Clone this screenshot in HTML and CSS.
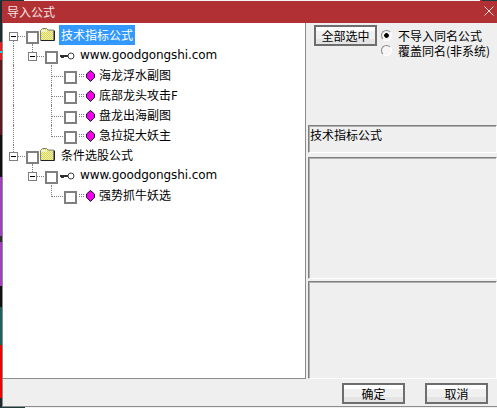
FILE: index.html
```html
<!DOCTYPE html>
<html lang="zh">
<head>
<meta charset="utf-8">
<title>导入公式</title>
<link rel="stylesheet" href="styles.css">
</head>
<body>
<svg class="defs" width="0" height="0" aria-hidden="true">
  <defs>
    <pattern id="dither" width="2" height="2" patternUnits="userSpaceOnUse"><rect width="2" height="2" fill="#ffff40"/><rect width="1" height="1" fill="#c8c8c0"/><rect x="1" y="1" width="1" height="1" fill="#c8c8c0"/></pattern>
    <symbol id="folder" viewBox="0 0 15 13"><path d="M0.5 12.5V2.5L2.5 0.5H6.5L8 2H13.5V12.5Z" fill="url(#dither)" stroke="#808080"/><path d="M1 3H7" stroke="#fff"/><path d="M1 12.5H14.5V2.5" stroke="#202020" fill="none"/></symbol>
    <symbol id="key" viewBox="0 0 15 8"><circle cx="11" cy="4" r="3" fill="#fff" stroke="#404040"/><path d="M0 3.5H8M0 4.5H8M1 5.5H4" stroke="#303030" fill="none"/></symbol>
    <symbol id="gem" viewBox="0 0 16 12"><path d="M0 4.5H5M0 6.5H5" stroke="#808080" stroke-dasharray="1 1"/><path d="M7.5 4L11.5 0.5L15.5 4V7.5L11.5 11.5L7.5 7.5Z" fill="#f000e8" stroke="#101030"/></symbol>
  </defs>
</svg>
<div class="window">
  <header class="titlebar">
    <span class="title">导入公式</span>
    <svg class="close" width="10" height="10" viewBox="0 0 10 10"><path d="M0.5 0.5L9.5 9.5M9.5 0.5L0.5 9.5" stroke="#f0d8d9" stroke-width="1" fill="none"/></svg>
  </header>
  <div class="content">
    <div class="tree">
      <div class="row">
        <span class="expander root-exp first"></span><span class="hline"></span><span class="check"></span>
        <svg class="folder"><use href="#folder"/></svg>
        <span class="label selected">技术指标公式</span>
      </div>
      <div class="row">
        <span class="guide"></span>
        <span class="expander"></span><span class="hline"></span><span class="check"></span>
        <svg class="key"><use href="#key"/></svg>
        <span class="label url">www.goodgongshi.com</span>
      </div>
      <div class="row">
        <span class="guide"></span><span class="guide blank"></span><span class="guide branch"></span><span class="check"></span>
        <svg class="gem"><use href="#gem"/></svg>
        <span class="label leaf">海龙浮水副图</span>
      </div>
      <div class="row">
        <span class="guide"></span><span class="guide blank"></span><span class="guide branch"></span><span class="check"></span>
        <svg class="gem"><use href="#gem"/></svg>
        <span class="label leaf">底部龙头攻击F</span>
      </div>
      <div class="row">
        <span class="guide"></span><span class="guide blank"></span><span class="guide branch"></span><span class="check"></span>
        <svg class="gem"><use href="#gem"/></svg>
        <span class="label leaf">盘龙出海副图</span>
      </div>
      <div class="row">
        <span class="guide"></span><span class="guide blank"></span><span class="guide branch last"></span><span class="check"></span>
        <svg class="gem"><use href="#gem"/></svg>
        <span class="label leaf">急拉捉大妖主</span>
      </div>
      <div class="row">
        <span class="expander root-exp tail"></span><span class="hline"></span><span class="check"></span>
        <svg class="folder"><use href="#folder"/></svg>
        <span class="label folder-label">条件选股公式</span>
      </div>
      <div class="row">
        <span class="guide blank"></span>
        <span class="expander"></span><span class="hline"></span><span class="check"></span>
        <svg class="key"><use href="#key"/></svg>
        <span class="label url">www.goodgongshi.com</span>
      </div>
      <div class="row">
        <span class="guide blank"></span><span class="guide blank"></span><span class="guide branch last"></span><span class="check"></span>
        <svg class="gem"><use href="#gem"/></svg>
        <span class="label leaf">强势抓牛妖选</span>
      </div>
    </div>
    <aside class="side">
      <div class="options">
        <button class="btn">全部选中</button>
        <div class="radios">
          <div class="radio-row"><span class="radio on"></span><span>不导入同名公式</span></div>
          <div class="radio-row"><span class="radio"></span><span>覆盖同名(非系统)</span></div>
        </div>
      </div>
      <div class="panel name">技术指标公式</div>
      <div class="panel desc"></div>
      <div class="panel notes"></div>
    </aside>
  </div>
  <footer class="footer">
    <button class="btn">确定</button>
    <button class="btn">取消</button>
  </footer>
</div>
</body>
</html>
```
FILE: styles.css
```css
* { box-sizing: border-box; }
html, body { margin: 0; padding: 0; }
body {
  width: 497px;
  height: 408px;
  overflow: hidden;
  background:
    linear-gradient(to right, #1c3a3c 0, #1c3a3c 24px, #f4f4f4 24px, #f4f4f4 480px, #d02020 480px, #d02020 482px, #1c3a3c 482px) top / 100% 1px no-repeat,
    linear-gradient(to right, #1c3a3c 0, #1c3a3c 25px, #efefef 25px) bottom / 100% 1px no-repeat,
    linear-gradient(to bottom, #1c2b30 0, #1c2b30 42px, #e02020 42px, #e02020 51px, #20d0e0 51px, #20d0e0 53px, #e02020 53px, #e02020 60px, #5a1a20 60px, #5a1a20 135px, #101010 135px, #101010 177px, #a040c0 177px, #a040c0 236px, #303030 236px, #303030 242px, #a040c0 242px, #a040c0 286px, #101010 286px, #101010 307px, #1c6060 307px, #1c6060 345px, #f00000 345px, #f00000 398px, #1c2b30 398px);
  font: 12px/14px "Noto Sans CJK SC", "Liberation Sans", sans-serif;
  color: #000;
}
.defs { position: absolute; }
.window {
  margin: 1px 0 0 2px;
  width: 495px;
  height: 406px;
  background: #efefef;
  display: flex;
  flex-direction: column;
  border-bottom: 1px solid #8c8c8c;
}
.titlebar {
  height: 22px;
  flex: none;
  background: #b03034;
  color: #f4e4e4;
  display: flex;
  align-items: center;
  justify-content: space-between;
  padding: 0 3px 0 5px;
}
.close { margin-bottom: 3px; }
.content {
  display: flex;
  height: 356px;
  flex: none;
}
.tree {
  width: 304px;
  flex: none;
  background: #fff;
  border-left: 1px solid #8c8c8c;
  border-right: 1px solid #8c8c8c;
  border-bottom: 1px solid #8c8c8c;
  padding-top: 2px;
}
.row {
  height: 20px;
  display: flex;
  align-items: flex-start;
  padding-left: 10px;
}
.check {
  width: 13px;
  height: 13px;
  margin-top: 6px;
  border: 2px solid #808080;
  background: #fff;
  flex: none;
}
.expander {
  width: 9px;
  height: 9px;
  margin: 7px 0 0 14px;
  border: 1px solid #808080;
  background: linear-gradient(#000, #000) center / 5px 1px no-repeat #fff;
  flex: none;
  position: relative;
}
.expander::before {
  content: "";
  position: absolute;
  left: 3px;
  top: -9px;
  height: 8px;
  border-left: 1px dotted #808080;
}
.root-exp { margin-left: -4px; }
.root-exp.first::before { display: none; }
.root-exp.tail::before { top: -8px; height: 7px; }
.root-exp.first::after {
  content: "";
  position: absolute;
  left: 3px;
  top: 8px;
  height: 5px;
  border-left: 1px dotted #808080;
}
.hline {
  width: 8px;
  height: 1px;
  margin-top: 11px;
  background: repeating-linear-gradient(to right, #808080 0, #808080 1px, transparent 1px, transparent 2px);
  flex: none;
}
.guide {
  width: 19px;
  align-self: stretch;
  border-left: 1px dotted #808080;
  flex: none;
}
.guide.blank { border-left-color: transparent; }
.row > .guide:first-child { width: 0; }
.row > .guide:first-child + .guide { margin-left: 18px; }
.guide.branch {
  width: 13px;
  background: repeating-linear-gradient(to right, #808080 0, #808080 1px, transparent 1px, transparent 2px) left 11px / 100% 1px no-repeat;
}
.guide.branch.last { align-self: flex-start; height: 12px; }
.folder { width: 15px; height: 13px; margin: 3px 0 0 1px; flex: none; }
.key { width: 15px; height: 8px; margin: 7px 0 0 2px; flex: none; }
.gem { width: 16px; height: 12px; margin: 5px 0 0 2px; flex: none; }
.label { margin: 3px 0 0 5px; white-space: nowrap; }
.leaf { margin-left: 4px; }
.selected {
  margin: 0 0 0 4px;
  padding: 3px 2px;
  background: #3399ff;
  color: #fff;
}
.folder-label { margin-left: 6px; }
.url { font-family: "DejaVu Sans", sans-serif; letter-spacing: -0.1px; }
.side {
  flex: 1;
  min-width: 0;
  display: flex;
  flex-direction: column;
  padding-left: 2px;
}
.options {
  display: flex;
  height: 102px;
  padding: 2px 0 0 6px;
}
.btn {
  width: 63px;
  height: 21px;
  padding: 0;
  border: 2px solid #6e6e6e;
  background: linear-gradient(#fff 0, #fff 25%, #f0f0f0 25%, #f0f0f0 70%, #e4e4e4 70%);
  font: 12px/14px "Noto Sans CJK SC", sans-serif;
  color: #000;
}
.radios { margin-left: 4px; padding-top: 3px; }
.radio-row {
  display: flex;
  align-items: center;
  height: 15px;
  gap: 6px;
  white-space: nowrap;
}
.radio {
  width: 11px;
  height: 11px;
  border-radius: 50%;
  background: #f6f6f6;
  border: 1px solid;
  border-color: #8a8a8a #fff #fff #8a8a8a;
  flex: none;
}
.radio.on { background: radial-gradient(circle, #000 0, #000 2px, #f2f2f2 2.6px); }
.panel {
  border: 1px solid #808080;
  border-right-color: #fff;
  border-bottom-color: #fff;
  box-shadow: inset 1px 1px 0 #b0b0b0;
}
.name { height: 28px; padding: 2px 0 0 1px; margin-bottom: 4px; }
.desc { height: 122px; margin-bottom: 2px; }
.notes { height: 98px; }
.footer {
  flex: 1;
  display: flex;
  justify-content: flex-end;
  gap: 20px;
  padding: 4px 9px 0 0;
  border-left: 1px solid #8c8c8c;
}
```
